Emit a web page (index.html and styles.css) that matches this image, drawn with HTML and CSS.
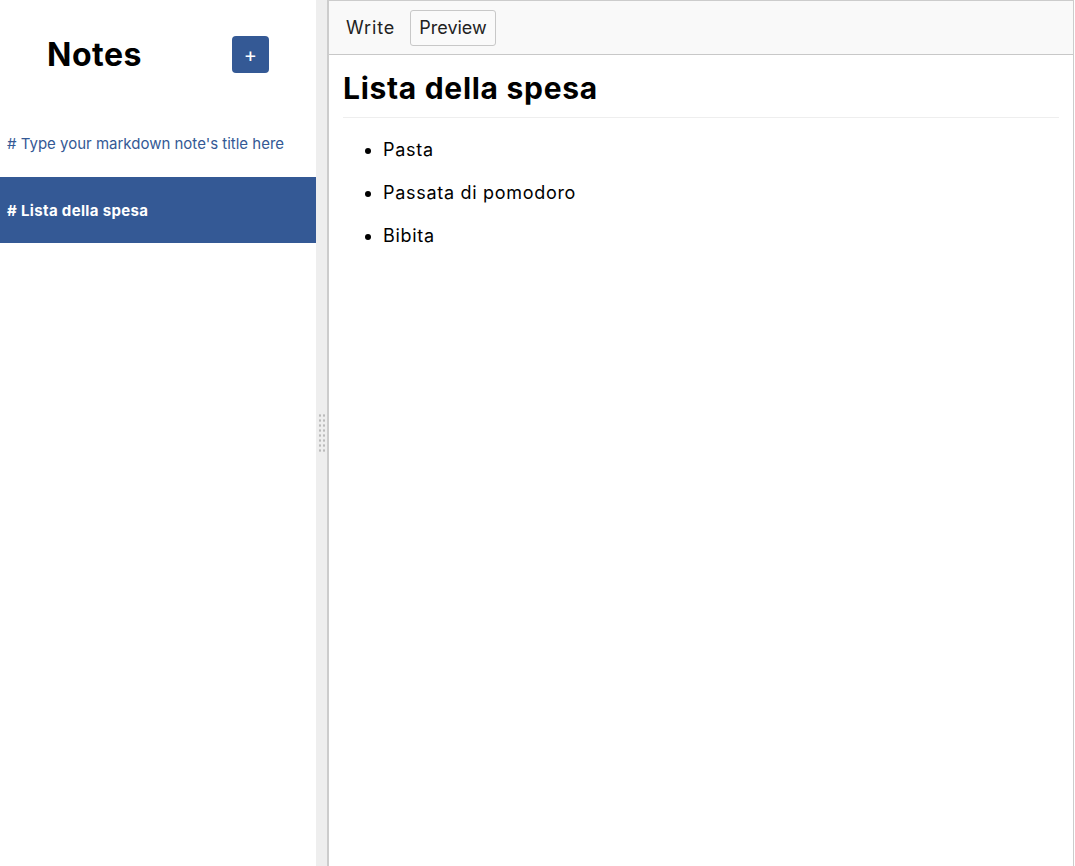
FILE: index.html
```html
<!DOCTYPE html>
<html>
<head>
<meta charset="utf-8">
<link rel="stylesheet" href="styles.css">
</head>
<body>
<div class="app">
  <aside class="sidebar">
    <div class="sidebar-header">
      <h1 class="title">Notes</h1>
      <button class="add-btn">+</button>
    </div>
    <div class="notes">
      <div class="note">
        <span class="note-title"># Type your markdown note's title here</span>
      </div>
      <div class="note selected">
        <span class="note-title"># Lista della spesa</span>
      </div>
    </div>
  </aside>
  <div class="gutter"><div class="grip"></div></div>
  <section class="editor">
    <div class="editor-header">
      <button class="tab write">Write</button>
      <button class="tab active">Preview</button>
    </div>
    <div class="preview">
      <h1>Lista della spesa</h1>
      <ul>
        <li>Pasta</li>
        <li>Passata di pomodoro</li>
        <li>Bibita</li>
      </ul>
    </div>
  </section>
</div>
</body>
</html>
```
FILE: styles.css
```css
* { box-sizing: border-box; }
html, body { margin: 0; padding: 0; }
body {
  font-family: "Inter", "Liberation Sans", sans-serif;
  color: #000;
  background: #fff;
}
.app {
  display: flex;
  height: 866px;
}
.sidebar {
  width: 316px;
  flex: none;
  background: #fff;
}
.sidebar-header {
  display: flex;
  align-items: center;
  justify-content: space-around;
  height: 110px;
  padding-bottom: 1px;
}
.title {
  margin: 0 0 0 2px;
  font-size: 32px;
  font-weight: 700;
  letter-spacing: 0.5px;
}
.add-btn {
  width: 37px;
  height: 37px;
  border: none;
  border-radius: 4px;
  background: #345995;
  color: #fff;
  font-size: 20px;
  font-family: inherit;
  padding: 0;
  margin-right: 2px;
}
.notes { display: flex; flex-direction: column; }
.note {
  height: 66px;
  display: flex;
  align-items: center;
  padding-left: 7px;
  font-size: 15px;
  color: #345995;
}
.note.selected {
  background: #345995;
  color: #fff;
  font-weight: 700;
  letter-spacing: 0.35px;
  margin-top: 1px;
}
.gutter {
  width: 12px;
  flex: none;
  background: #eee;
  border-right: 1px solid #ccc;
  display: flex;
  align-items: center;
  justify-content: center;
}
.grip {
  width: 8px;
  height: 40px;
  background-image: radial-gradient(circle, #bbb 1px, transparent 1.3px);
  background-size: 4px 5px;
}
.editor {
  flex: 1;
  border: 1px solid #ccc;
  border-bottom: none;
  margin-right: 1px;
  display: flex;
  flex-direction: column;
}
.editor-header {
  height: 54px;
  background: #f9f9f9;
  border-bottom: 1px solid #c8c8c8;
  display: flex;
  align-items: center;
  padding-left: 8px;
}
.tab {
  font-family: inherit;
  font-size: 18px;
  color: #222;
  background: transparent;
  border: 1px solid transparent;
  border-radius: 3px;
  height: 36px;
  padding: 0 8px;
  margin-right: 6px;
  letter-spacing: 0;
}
.tab.write { letter-spacing: 0.9px; }
.tab.active {
  border-color: #c8c8c8;
  background: #fafafa;
}
.preview {
  padding: 10px 14px;
}
.preview h1 {
  margin: 5px 0 0;
  font-size: 30px;
  font-weight: 700;
  padding-bottom: 11px;
  border-bottom: 1px solid #eee;
  letter-spacing: 0.7px;
}
.preview ul {
  margin: 20px 0 0;
  padding-left: 40px;
  font-size: 18px;
  letter-spacing: 0.7px;
}
.preview li {
  line-height: 24px;
  margin-bottom: 19px;
}
```
